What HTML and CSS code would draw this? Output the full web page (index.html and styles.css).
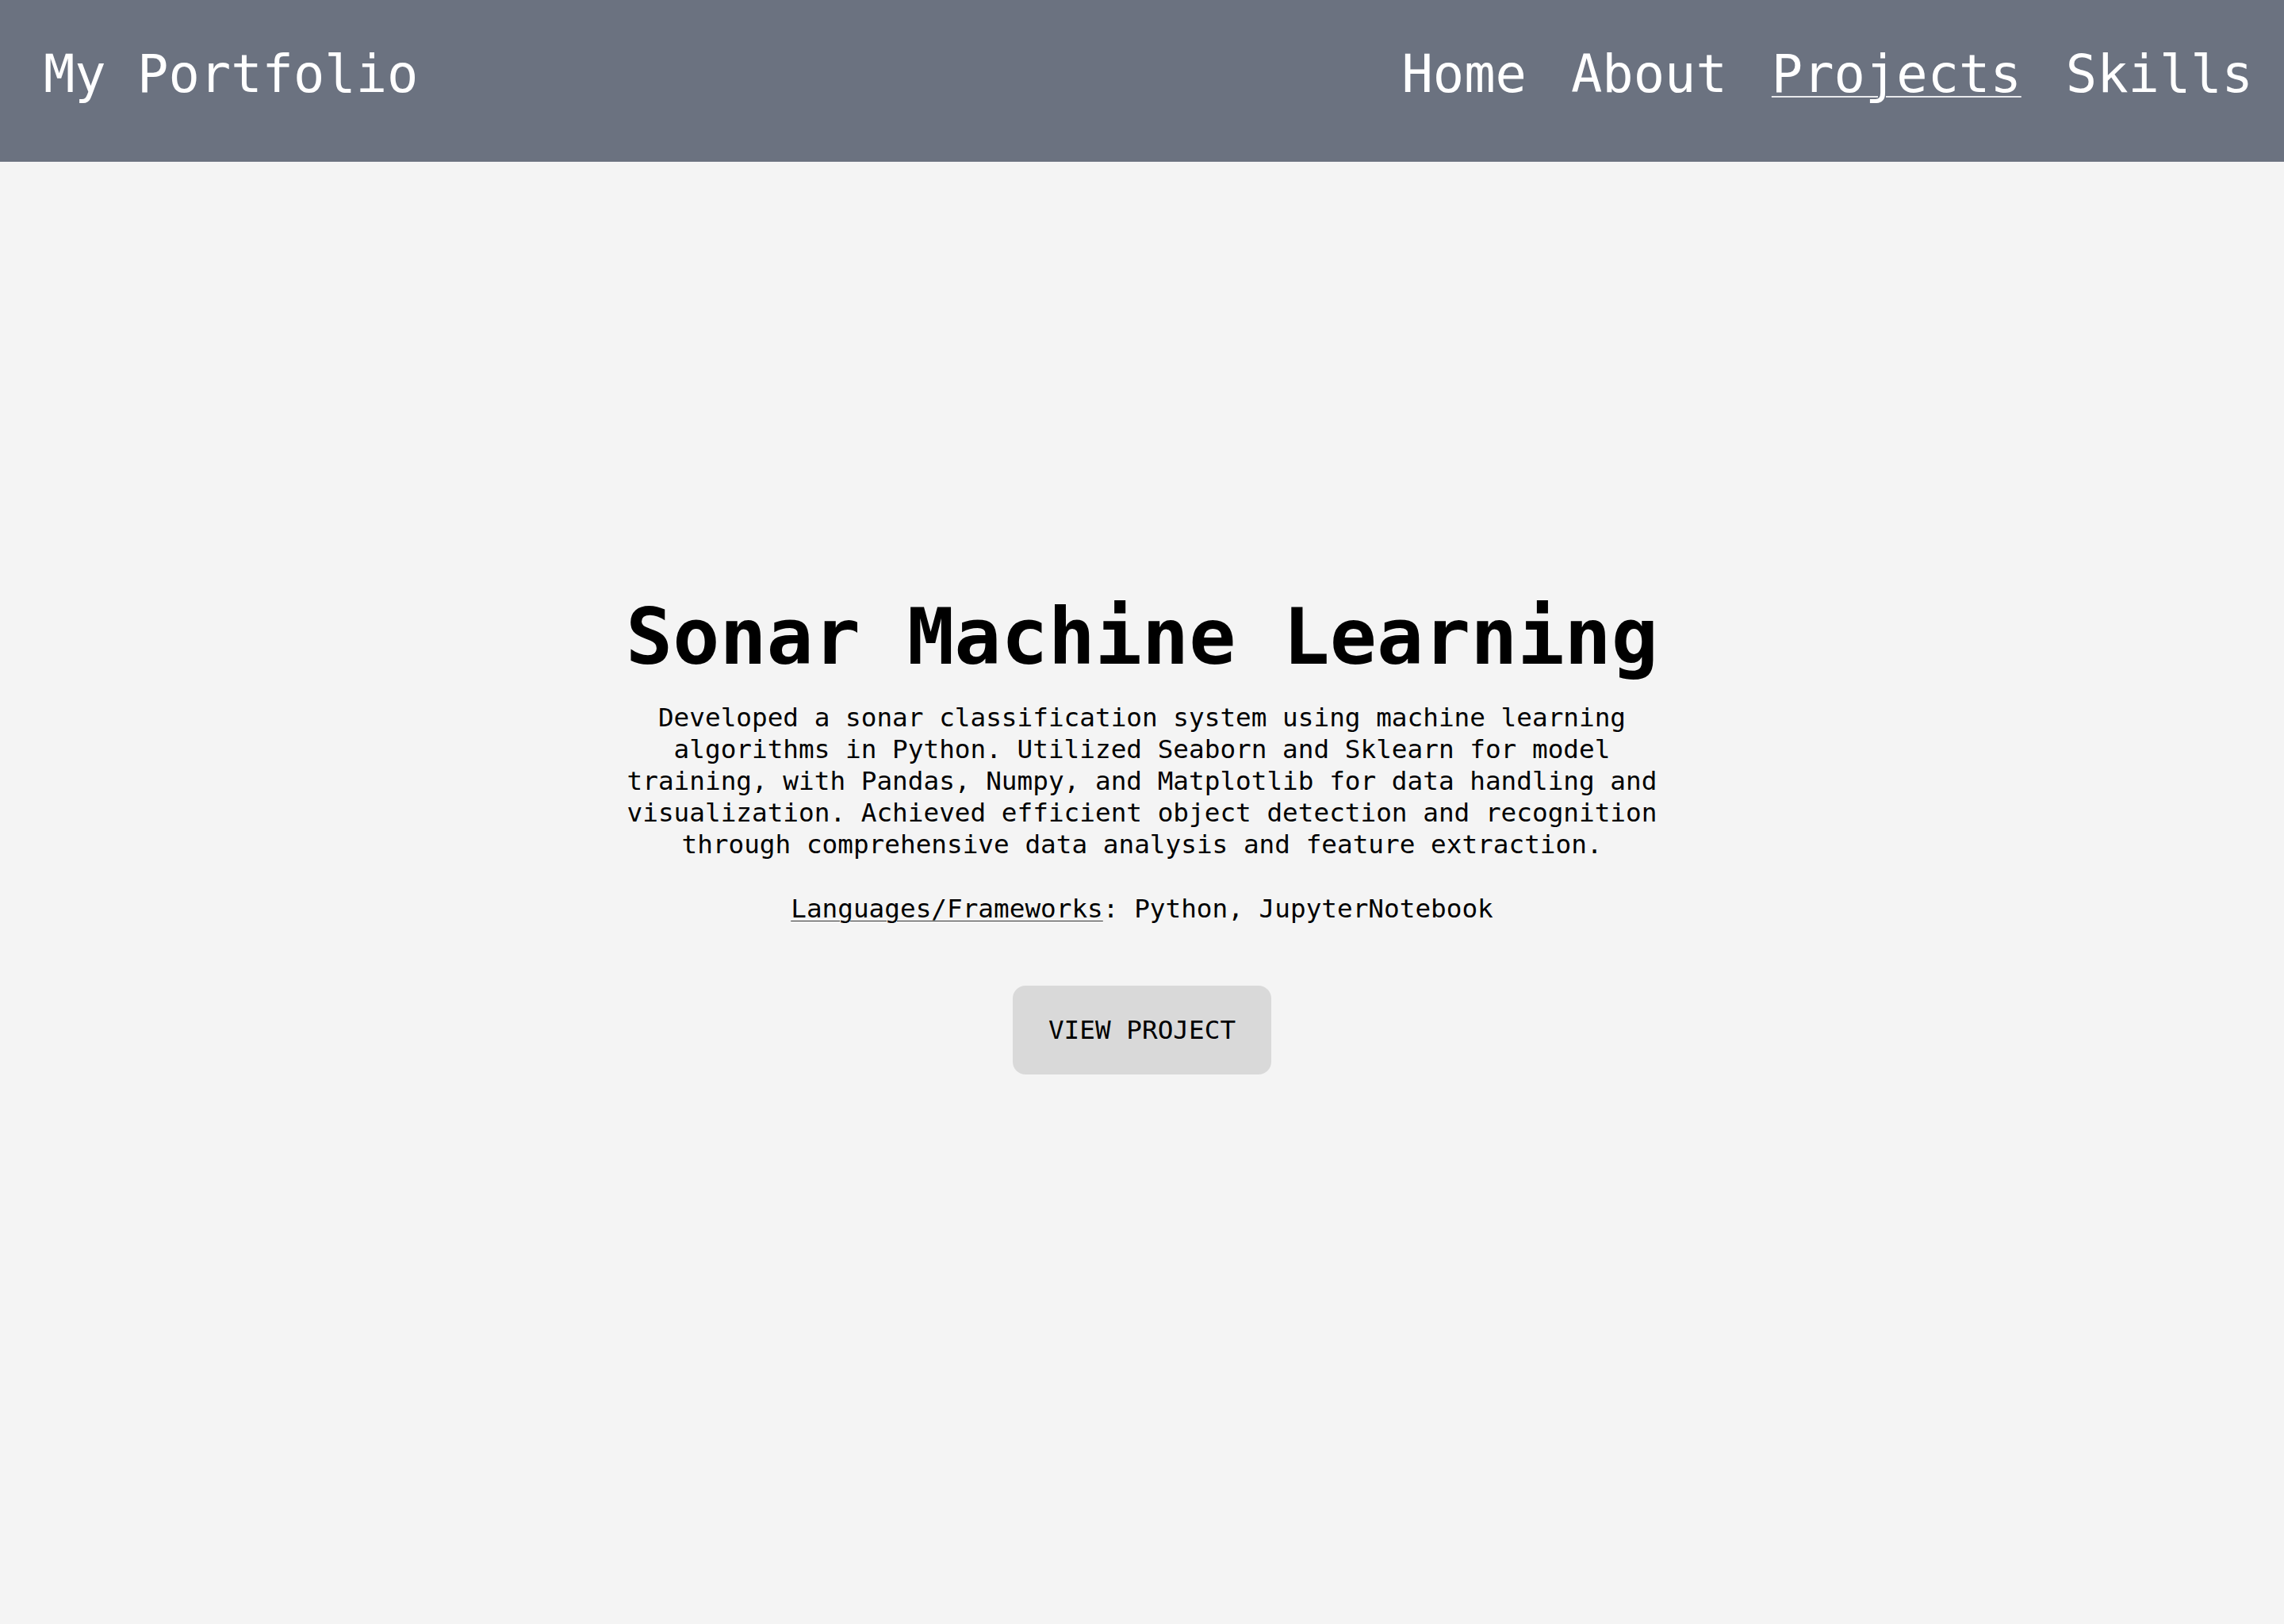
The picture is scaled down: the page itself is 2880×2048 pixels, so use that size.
FILE: index.html
```html
<!DOCTYPE html>
<html lang="en">
<head>
<meta charset="utf-8">
<title>My Portfolio</title>
<link rel="stylesheet" href="styles.css">
</head>
<body>
<header class="site-header">
  <a class="brand" href="#">My Portfolio</a>
  <nav class="nav">
    <a class="nav-link" href="#">Home</a>
    <a class="nav-link" href="#">About</a>
    <a class="nav-link active" href="#">Projects</a>
    <a class="nav-link" href="#">Skills</a>
  </nav>
</header>
<main class="main">
  <section class="project">
    <h1 class="project-title">Sonar Machine Learning</h1>
    <p class="project-desc">Developed a sonar classification system using machine learning algorithms in Python. Utilized Seaborn and Sklearn for model training, with Pandas, Numpy, and Matplotlib for data handling and visualization. Achieved efficient object detection and recognition through comprehensive data analysis and feature extraction.</p>
    <p class="project-langs"><span class="langs-label">Languages/Frameworks</span>: Python, JupyterNotebook</p>
    <div class="project-actions">
      <a class="btn" href="#">VIEW PROJECT</a>
    </div>
  </section>
</main>
</body>
</html>
```
FILE: styles.css
```css
html, body {
  margin: 0;
  padding: 0;
}
body {
  background: #f4f4f4;
  color: #000;
  font-family: "DejaVu Sans Mono", "Liberation Mono", monospace;
  min-height: 2048px;
}
a {
  color: inherit;
  text-decoration: none;
}
.site-header {
  box-sizing: border-box;
  height: 204px;
  background: #6b7280;
  color: #fff;
  display: flex;
  justify-content: space-between;
  align-items: flex-start;
  padding: 53px 39px 0 55px;
  font-size: 65.4px;
  line-height: 80px;
}
.nav {
  display: flex;
  gap: 56px;
}
.nav-link.active {
  text-decoration: underline;
  text-decoration-thickness: 2px;
  text-underline-offset: 5px;
  text-decoration-color: #e8e9ec;
}
.main {
  padding-top: 540px;
}
.project {
  width: 1310px;
  margin: 0 auto;
  text-align: center;
}
.project-title {
  margin: 0 0 23px;
  font-size: 98.3px;
  line-height: 118px;
  font-weight: 700;
}
.project-desc,
.project-langs {
  margin: 0;
  font-size: 32.7px;
  line-height: 40px;
}
.project-langs {
  margin-top: 41px;
}
.langs-label {
  text-decoration: underline;
  text-decoration-thickness: 1px;
  text-underline-offset: 4px;
  text-decoration-color: #333;
}
.project-actions {
  margin-top: 77px;
  display: flex;
  justify-content: center;
}
.btn {
  display: block;
  background: #d9d9d9;
  border-radius: 16px;
  padding: 36px 45px;
  font-size: 32.7px;
  line-height: 40px;
  color: #000;
}
```
